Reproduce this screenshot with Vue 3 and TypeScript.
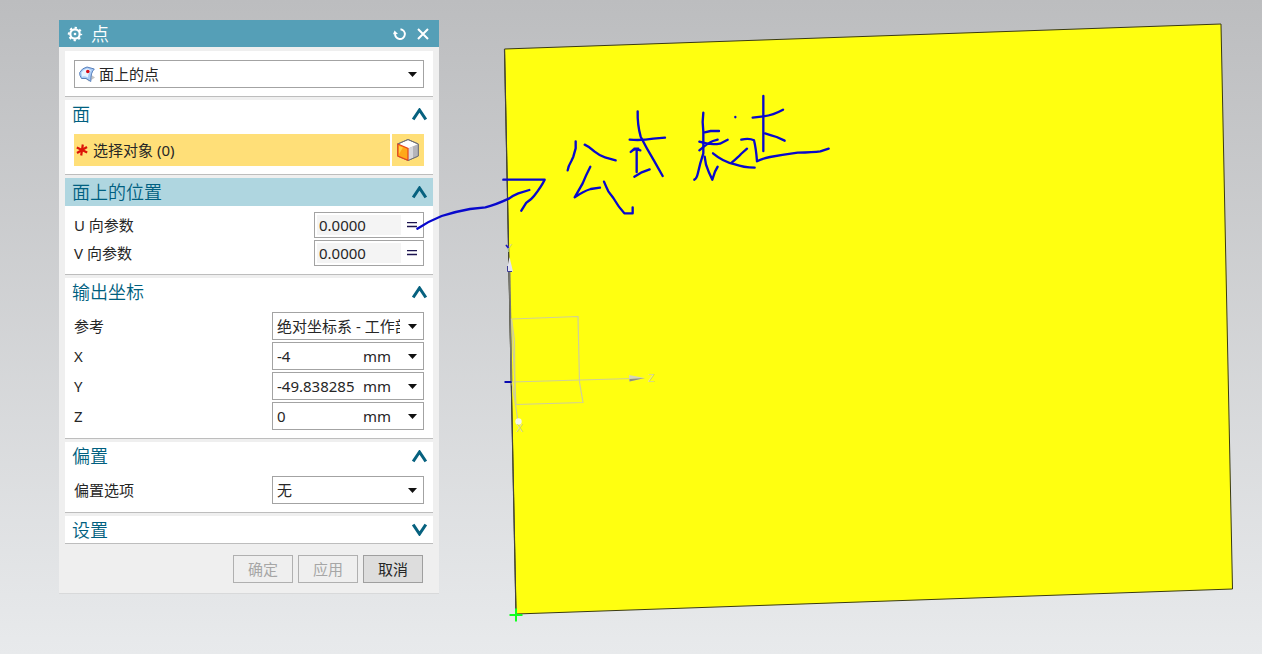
<script setup lang="ts">
import { reactive, ref } from 'vue'

type SectionKey = 'face' | 'position' | 'output' | 'offset' | 'settings'

const open = reactive<Record<SectionKey, boolean>>({
  face: true,
  position: true,
  output: true,
  offset: true,
  settings: false,
})

const pointType = ref('面上的点')
const reference = ref('绝对坐标系 - 工作部件')
const offsetOption = ref('无')

const params = reactive([
  { id: 'u', label: 'U 向参数', value: '0.0000' },
  { id: 'v', label: 'V 向参数', value: '0.0000' },
])

const coords = reactive([
  { id: 'x', label: 'X', value: '-4' },
  { id: 'y', label: 'Y', value: '-49.838285' },
  { id: 'z', label: 'Z', value: '0' },
])

function chevron(key: SectionKey): string {
  return open[key] ? 'M1.2 11.5L7.5 2L13.8 11.5' : 'M1.2 1.5L7.5 11L13.8 1.5'
}

function toggle(key: SectionKey): void {
  open[key] = !open[key]
}
</script>

<template>
  <main class="viewport">
    <svg class="scene" viewBox="0 0 1262 654" preserveAspectRatio="xMinYMin meet" aria-hidden="true">
      <polygon points="504.5,49 1221,24 1232.5,589 516,614" fill="#ffff10" stroke="#3a3a10" stroke-width="1" />
      <path d="M504.500 49L516 614" stroke="#44443c" stroke-width="1.2" fill="none" />
      <path d="M509.500 270L511.500 382" stroke="#77776f" stroke-width="1.800" fill="none" />
      <g fill="none" stroke="#cfcf9a" stroke-width="1.200">
        <path d="M511.500 319L578 316.500L579.500 382L583 402.500L516 404.500Z" />
        <path d="M511.500 319L514.500 340L515 400M511.500 382L632 378.500M512 383L518 421" />
      </g>
      <path d="M509.500 257L506.500 271.500H513Z" fill="#e4e4ee" />
      <path d="M507.500 266V271.500H512" fill="none" stroke="#3c3c94" stroke-width="1" />
      <path d="M629 375L645 378L629.500 381.500Z" fill="#d6d6b8" />
      <path d="M629.500 379L645 378L629.500 381.500Z" fill="#92927a" />
      <circle cx="518.500" cy="421.500" r="3.200" fill="#f5f5ed" />
      <path d="M504.500 382H511.500" stroke="#0a0ab0" stroke-width="2" />
      <g class="axis">
        <text x="505" y="252">Y</text>
        <text x="648" y="382">Z</text>
        <text x="516" y="432">X</text>
      </g>
      <path d="M506 245L508.500 248" stroke="#1818c0" stroke-width="1.800" />
      <path d="M509.500 615H522.500M516 608.500V621.500" stroke="#10ff20" stroke-width="2" />
    </svg>

    <form class="dialog" aria-label="点" @submit.prevent>
      <header class="titlebar">
        <svg class="gear" width="16" height="16" viewBox="0 0 16 16" aria-hidden="true">
          <circle cx="8" cy="8" r="4.700" fill="none" stroke="#fff" stroke-width="2.200" />
          <circle cx="8" cy="8" r="6.200" fill="none" stroke="#fff" stroke-width="2" stroke-dasharray="2.300 2.570" stroke-dashoffset="1.150" />
          <circle cx="8" cy="8" r="1.300" fill="#fff" />
        </svg>
        <h1>点</h1>
        <button type="button" class="tool" aria-label="重置">
          <svg width="14" height="14" viewBox="0 0 14 14">
            <path d="M7.500 2.200A4.900 4.900 0 1 1 2.100 6.500" fill="none" stroke="#fff" stroke-width="1.900" />
            <path d="M0 7.300L1.600 3.600L5 7Z" fill="#fff" />
          </svg>
        </button>
        <button type="button" class="tool" aria-label="关闭">
          <svg width="12" height="12" viewBox="0 0 12 12">
            <path d="M1 1L11 11M11 1L1 11" stroke="#fff" stroke-width="2" />
          </svg>
        </button>
      </header>

      <div class="sections">
        <section class="type">
          <div class="box">
            <svg class="type-icon" width="17" height="17" viewBox="0 0 17 17" aria-hidden="true">
              <path d="M11 8L16 11.500L10 15.500L7 13Z" fill="#c4c4c4" />
              <path d="M0.700 6.500Q3 2 8 1L15.300 3Q11.500 6.500 11.800 15.500Q7 11 2.500 12.500Q0.200 9 0.700 6.500Z" fill="#a9cbf6" stroke="#5880bc" stroke-width="1" />
              <path d="M2.500 6.500Q5 3 8.500 2.500L12 4.500Q9 7 9 11.500Q5 9.500 3 10.800Z" fill="#e8f3ff" />
              <circle cx="8.800" cy="5.500" r="1.800" fill="#d80c18" />
            </svg>
            <select v-model="pointType" aria-label="类型">
              <option>面上的点</option>
            </select>
            <svg class="arrow" width="9" height="5" viewBox="0 0 9 5"><path d="M0 0H9L4.500 5Z" /></svg>
          </div>
        </section>

        <section>
          <h2>
            <button type="button" :aria-expanded="open.face" @click="toggle('face')">
              面<svg width="15" height="13" viewBox="0 0 15 13"><path :d="chevron('face')" /></svg>
            </button>
          </h2>
          <div v-if="open.face" class="body pick">
            <button type="button" class="select-object">
              <svg width="12" height="12" viewBox="0 0 12 12" aria-hidden="true">
                <path d="M6.800 0.500L5.200 11.500M0.800 3.500L11.200 8.500M1 9L11 3" stroke="#dc1408" stroke-width="2.200" />
              </svg>
              选择对象 (0)
            </button>
            <button type="button" class="cube" aria-label="面">
              <svg width="22" height="22" viewBox="0 0 22 22">
                <path d="M11 0.500L21.300 5V17L11 21.500L0.700 17V5Z" fill="#fff" stroke="#777" />
                <path d="M11 9.500L21.300 5V17L11 21.500Z" fill="#b4b4ba" />
                <path d="M11 9.500L16 7.500V19L11 21.500Z" fill="#d8d8dc" />
                <path d="M0.800 5L11 9.500V21.300L0.800 17Z" fill="#ffa818" stroke="#e84618" stroke-width="1.200" />
                <path d="M2 7L6 8.500L2 15Z" fill="#ffd040" />
                <path d="M0.700 5L11 0.500L21.300 5V17L11 21.500" fill="none" stroke="#707074" />
              </svg>
            </button>
          </div>
        </section>

        <section>
          <h2 class="current">
            <button type="button" :aria-expanded="open.position" @click="toggle('position')">
              面上的位置<svg width="15" height="13" viewBox="0 0 15 13"><path :d="chevron('position')" /></svg>
            </button>
          </h2>
          <div v-if="open.position" class="body">
            <div v-for="p in params" :key="p.id" class="row">
              <label :for="p.id + '-param'">{{ p.label }}</label>
              <div class="box param">
                <input :id="p.id + '-param'" v-model="p.value" type="text" readonly />
                <button type="button" :aria-label="p.label + ' 公式'">
                  <svg width="10" height="6" viewBox="0 0 10 6"><path d="M0 0.500H10M0 4.500H10" stroke="#1c1450" stroke-width="1.600" /></svg>
                </button>
              </div>
            </div>
          </div>
        </section>

        <section>
          <h2>
            <button type="button" :aria-expanded="open.output" @click="toggle('output')">
              输出坐标<svg width="15" height="13" viewBox="0 0 15 13"><path :d="chevron('output')" /></svg>
            </button>
          </h2>
          <div v-if="open.output" class="body">
            <div class="row">
              <label for="reference">参考</label>
              <div class="box field">
                <select id="reference" v-model="reference">
                  <option>绝对坐标系 - 工作部件</option>
                </select>
                <svg class="arrow" width="9" height="5" viewBox="0 0 9 5"><path d="M0 0H9L4.500 5Z" /></svg>
              </div>
            </div>
            <div v-for="c in coords" :key="c.id" class="row">
              <label :for="c.id + '-coord'">{{ c.label }}</label>
              <div class="box field">
                <input :id="c.id + '-coord'" v-model="c.value" type="text" />
                <span class="unit">mm</span>
                <button type="button" class="menu" :aria-label="c.label + ' 选项'">
                  <svg class="arrow" width="9" height="5" viewBox="0 0 9 5"><path d="M0 0H9L4.500 5Z" /></svg>
                </button>
              </div>
            </div>
          </div>
        </section>

        <section>
          <h2>
            <button type="button" :aria-expanded="open.offset" @click="toggle('offset')">
              偏置<svg width="15" height="13" viewBox="0 0 15 13"><path :d="chevron('offset')" /></svg>
            </button>
          </h2>
          <div v-if="open.offset" class="body">
            <div class="row">
              <label for="offset">偏置选项</label>
              <div class="box field">
                <select id="offset" v-model="offsetOption">
                  <option>无</option>
                </select>
                <svg class="arrow" width="9" height="5" viewBox="0 0 9 5"><path d="M0 0H9L4.500 5Z" /></svg>
              </div>
            </div>
          </div>
        </section>

        <section class="last">
          <h2>
            <button type="button" :aria-expanded="open.settings" @click="toggle('settings')">
              设置<svg width="15" height="13" viewBox="0 0 15 13"><path :d="chevron('settings')" /></svg>
            </button>
          </h2>
        </section>
      </div>

      <footer>
        <button type="submit" disabled>确定</button>
        <button type="button" disabled>应用</button>
        <button type="button">取消</button>
      </footer>
    </form>

    <!-- freehand pen annotation, drawn above the dialog -->
    <svg class="scene ink" viewBox="0 0 1262 654" preserveAspectRatio="xMinYMin meet" aria-hidden="true">
      <g transform="translate(250 170) scale(0.33333)">
        <path d="M502 176Q535 154 575 138Q620 124 660 117L706 112Q735 105 778 85Q790 76 805 70L838 60" />
        <path d="M760 29H884Q875 48 852 78Q845 88 829 98L814 122" />
      </g>
      <g transform="translate(550 80) scale(0.33333)">
        <path d="M77 184V205L70 230L64 243Q55 258 53 271" />
        <path d="M104 194Q118 200 134 215Q150 228 165 232L197 241" />
        <path d="M121 260Q108 285 98 310L74 352Q100 334 122 327L150 323" />
        <path d="M162 305Q168 320 175 334L190 354Q205 380 223 400H248V382" />
        <path d="M263 94Q262 135 272 170Q290 205 312 242L338 288" />
        <path d="M239 179Q275 182 310 176L345 173" />
        <path d="M242 216Q250 207 258 207L271 211M253 206H265M260 209V276" />
        <path d="M253 290L273 278L299 268" />
      </g>
      <g transform="translate(680 80) scale(0.33333)">
        <path d="M70 98Q66 125 70 155V220Q60 250 54 278Q50 296 43 299" />
        <path d="M74 157L92 153H117" />
        <path d="M58 185Q90 196 120 191L143 179M58 211Q85 188 99 183L113 179" />
        <path d="M74 230Q76 255 86 275L97 299L105 275L113 260" />
        <path d="M99 220Q130 246 165 253Q190 262 224 263" />
        <path d="M155 248Q175 231 183 222L201 206" />
        <path d="M166 111V112" />
        <path d="M184 179Q207 173 222 181Q228 205 231 244Q245 236 270 231Q310 224 353 218Q400 217 421 214L446 206" />
        <path d="M250 48V213" />
        <path d="M218 113L250 109Q280 105 309 89" />
        <path d="M255 160Q275 166 290 171L314 182" />
      </g>
    </svg>
  </main>
</template>

<style>
body {
  margin: 0;
}
</style>

<style scoped>
.viewport {
  position: relative;
  box-sizing: border-box;
  min-height: 100vh;
  padding: 20px 0 20px 59px;
  overflow: hidden;
  background: linear-gradient(#bcbdbf, #e8eaec);
  color: #262626;
  font-family: "Noto Sans", "Noto Sans CJK SC", sans-serif;
  font-size: 15px;
  line-height: 20px;
}

.scene {
  position: absolute;
  top: 0;
  left: 0;
  width: 100%;
  height: 100%;
}

.axis {
  fill: #d2d29c;
  font-family: "Liberation Sans", sans-serif;
  font-size: 11px;
}

.ink {
  pointer-events: none;
  fill: none;
  stroke: #0808cc;
  stroke-width: 7px;
  stroke-linecap: round;
  stroke-linejoin: round;
}

.dialog {
  position: relative;
  box-sizing: border-box;
  width: 380px;
  background: #efefef;
  border-bottom: 1px solid #d8d9da;
}

button,
input,
select {
  margin: 0;
  padding: 0;
  border: 0;
  border-radius: 0;
  background: none;
  color: inherit;
  font: inherit;
}

select {
  appearance: none;
}

svg {
  flex: none;
}

.titlebar {
  display: flex;
  align-items: center;
  gap: 8px;
  height: 27px;
  padding: 0 10px 0 8px;
  background: #559fb7;
  color: #fff;
}

.titlebar h1 {
  flex: 1;
  margin: 0;
  font-size: 18px;
  font-weight: 350;
  line-height: 26px;
}

.tool {
  display: flex;
}

.tool + .tool {
  margin-left: 2px;
}

.sections {
  display: flex;
  flex-direction: column;
  gap: 3px;
  padding: 4px 6px 0;
}

section {
  background: #fff;
  border-bottom: 1px solid #bdbdbd;
}

.type {
  padding: 9px 9px 8px;
}

h2 {
  margin: 0;
  color: #005f80;
  font-size: 18px;
  font-weight: 350;
}

h2 button {
  display: flex;
  align-items: center;
  justify-content: space-between;
  width: 100%;
  height: 28px;
  padding: 0 6px 0 7px;
}

h2 path {
  fill: none;
  stroke: #06617f;
  stroke-width: 3px;
}

.last h2 button {
  height: 27px;
}

.current {
  background: #afd6e0;
}

.body {
  display: flex;
  flex-direction: column;
  gap: 2px;
  padding: 6px 9px 8px;
}

.body.pick {
  flex-direction: row;
}

.pick button {
  display: flex;
  align-items: center;
  height: 32px;
  background: #ffdf78;
}

.select-object {
  flex: 1;
  gap: 5px;
  padding-left: 2px;
}

.cube {
  justify-content: center;
  width: 32px;
}

.row {
  display: flex;
  align-items: center;
  justify-content: space-between;
}

.box {
  display: flex;
  align-items: center;
  box-sizing: border-box;
  height: 28px;
  padding: 0 6px 0 4px;
  border: 1px solid #a3a3a3;
  background: #fff;
}

.box select {
  flex: 1;
  min-width: 0;
  height: 26px;
  margin-right: 8px;
  overflow: hidden;
  text-overflow: clip;
}

.type-icon {
  margin-right: 3px;
}

.field {
  width: 152px;
}

.param {
  width: 110px;
  height: 26px;
  padding: 0 6px 0 2px;
}

.box input {
  flex: 1;
  min-width: 0;
  width: 0;
}

.param input {
  height: 20px;
  margin-right: 6px;
  padding-left: 2px;
  background: #f4f4f4;
}

.box button {
  display: flex;
}

.unit {
  width: 45px;
}

.arrow {
  fill: #111;
}

footer {
  display: flex;
  justify-content: flex-end;
  gap: 5px;
  padding: 11px 16px 10px;
}

footer button {
  box-sizing: border-box;
  width: 60px;
  height: 28px;
  border: 1px solid #9f9f9f;
  background: #dddddd;
}

footer button:disabled {
  border-color: #b0b0b0;
  background: #efefef;
  color: #a6a6a6;
}
</style>
